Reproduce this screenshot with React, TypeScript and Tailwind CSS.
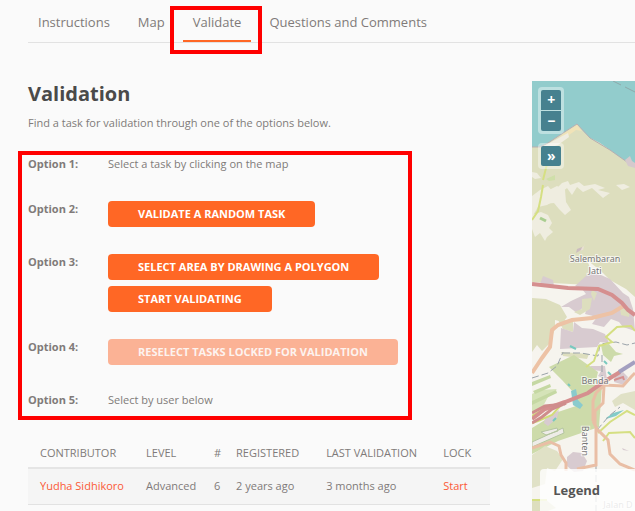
import type { ReactNode } from "react";

type Option = { label: string; content: ReactNode };

const tabs = ["Instructions", "Map", "Validate", "Questions and Comments"];

function ActionButton({ children, disabled = false }: { children: ReactNode; disabled?: boolean }) {
  return (
    <button
      type="button"
      disabled={disabled}
      className="h-[26px] rounded-[4px] bg-[#ff6725] px-[30px] text-[11px] leading-[26px] font-bold text-white uppercase disabled:bg-[#fbb295] disabled:text-[#fdf3ef]"
    >
      {children}
    </button>
  );
}

const options: Option[] = [
  { label: "Option 1:", content: <p>Select a task by clicking on the map</p> },
  {
    label: "Option 2:",
    content: (
      <div className="pt-[2px]">
        <ActionButton>Validate a random task</ActionButton>
      </div>
    ),
  },
  {
    label: "Option 3:",
    content: (
      <div className="flex flex-col items-start gap-[6px] pt-[2px]">
        <ActionButton>Select area by drawing a polygon</ActionButton>
        <ActionButton>Start validating</ActionButton>
      </div>
    ),
  },
  {
    label: "Option 4:",
    content: (
      <div className="pt-[2px]">
        <ActionButton disabled>Reselect tasks locked for validation</ActionButton>
      </div>
    ),
  },
  { label: "Option 5:", content: <p>Select by user below</p> },
];

const columns = [
  { name: "Contributor", width: "w-[106px]" },
  { name: "Level", width: "w-[68px]" },
  { name: "#", width: "w-[22px]" },
  { name: "Registered", width: "w-[90px]" },
  { name: "Last validation", width: "w-[117px]" },
  { name: "Lock", width: "w-[59px]" },
];

const contributors = [
  { name: "Yudha Sidhikoro", level: "Advanced", count: 6, registered: "2 years ago", last: "3 months ago" },
];

function NavBar() {
  return (
    <nav className="flex gap-2 border-b border-[#e2e2e2] text-[13px]">
      {tabs.map((tab) => {
        const active = tab === "Validate";
        return (
          <a
            key={tab}
            href="#"
            className={
              active
                ? "relative h-[42px] border-b-2 border-[#ff6725] px-[10px] leading-[44px]"
                : "h-[42px] px-[10px] leading-[44px]"
            }
          >
            {tab}
            {active && (
              <span className="pointer-events-none absolute top-[6px] -right-[11px] -bottom-[14px] -left-[13px] border-4 border-[#ff0000]" />
            )}
          </a>
        );
      })}
    </nav>
  );
}

function MapDrawing() {
  return (
    <svg
      viewBox="0 0 103 430"
      preserveAspectRatio="xMinYMin slice"
      className="block h-full w-full"
      aria-label="Map of the project area"
    >
      <rect width="103" height="430" fill="#f6f4ee" />
      {/* land and sea */}
      <path d="M0 66 8 66 16 62 31 52 45 43 51 50 58 57 68 62 78 69 86 75 95 81 103 84V216L94 208 78 199 69 190 55 179 61 194 58 204 0 201Z" fill="#dddebe" />
      <path d="M0 0H103V84L95 81 86 75 78 69 68 62 58 57 51 50 45 43 31 52 16 62 8 66 0 66Z" fill="#92cccc" />
      <path d="M0 66 8 66 16 62 31 52 45 43 58 57 78 69 95 81 103 84" fill="none" stroke="#b9aeb0" strokeWidth="1" />
      <path d="M31 53 45 44 50 50 44 49 37 54 32 59 27 57Z" fill="#f1e3b8" />
      <path d="M10 66 36 52 37 56 26 64 13 68Z" fill="#f0ede1" />
      <path d="M81 0 89 4M93 6 103 11" stroke="#8da9aa" strokeWidth="1" fill="none" />
      <path d="M93 79 98 75 100 80 103 82 103 87 96 85Z" fill="#d5c9cd" />
      {/* settlements */}
      <path d="M0 91 5 92 9 97 3 98 0 96ZM30 102 36 100 38 104 47 101 52 105 63 103 73 107 66 109 78 112 71 117 60 107 51 111 45 106 40 114 35 107 29 112 24 119 15 124 6 126 0 136V115L8 109 16 105 21 111Z" fill="#efede0" />
      <path d="M0 134 9 131 16 134 20 142 17 147 21 151 15 156 13 160 8 152 3 156 0 148Z" fill="#efede0" />
      <path d="M7 114 25 105 33 109 34 121 39 129 33 134 27 128 22 122 10 123Z" fill="#efede0" />
      <path d="M84 104 92 103 98 106 90 109Z" fill="#efede0" />
      <path d="M52 165 54 159 51 169 46 170Z" fill="#e9dfd5" />
      <path d="M45 168 50 166 49 169 44 172Z" fill="#cbbcbf" />
      <path d="M14 98 23 94 23 99 17 100Z" fill="#cfdfa9" />
      <path d="M14 67 16 79 11 99M11 104 9 116 6 130 0 139" fill="none" stroke="#d5df82" strokeWidth="2" />
      <path d="M8 137 14 140" stroke="#a9ce90" strokeWidth="3" fill="none" />
      <path d="M8 203 11 195 21 199 22 205 10 205ZM43 205 54 195 58 191 69 194 78 198 91 212 97 216 101 228 103 250 91 246 87 241 79 238 72 246 60 243 65 236 53 233 57 221 45 232 37 226 29 226 39 220 54 213 50 208Z" fill="#d8cbd0" />
      <path d="M0 217 14 218 28 224 35 236 31 241 23 239 23 248 17 263 10 270 5 264 0 271Z" fill="#dddebe" />
      <path d="M50 218 60 217 58 228 48 234 42 231 50 228ZM60 209 65 212 62 220 59 213ZM88 227 98 229 97 236 89 234ZM25 237 41 241 41 251 31 248Z" fill="#dddebe" />
      <path d="M29 247 41 251 42 241 50 247 61 248 73 253 77 262 68 261 65 266 28 268Z" fill="#d8cbd0" />
      <path d="M29 271 57 273 55 278 31 275Z" fill="#dddebe" />
      <path d="M58 285 73 285 75 299 66 295 69 290 60 289Z" fill="#d8cbd0" />
      <path d="M69 264 77 263 84 271 91 273 82 275 79 281 71 274Z" fill="#cddbaa" />
      <path d="M0 313 8 309 25 308 16 316 9 329 0 332Z" fill="#d5e3b8" />
      {/* airport */}
      <path d="M17 286 42 274 66 291 63 304 70 305 67 346 26 360 0 373V347L26 331 47 324 42 312 30 299Z" fill="#cddbaa" />
      <path d="M0 301 18 294 19 297 0 305ZM1 310 18 303 19 306 3 313ZM0 320 24 309 25 312 0 324Z" fill="#c5d8a3" />
      <path d="M0 361 31 347 32 352 0 366ZM9 351 25 347 26 350 14 354Z" fill="#eeece8" stroke="#b4c5a0" />
      <path d="M39 310 44 308 46 319 51 324 48 328 41 324Z" fill="#8acbcd" />
      <path d="M13 338 27 329 25 337 16 345 12 342Z" fill="#d8cbd0" />
      <path d="M0 335 14 327 31 322 20 334 6 340 0 342" fill="none" stroke="#d1dc78" strokeWidth="2" />
      <path d="M74 337 81 332 92 329 84 335 74 338Z" fill="#83cbc8" />
      {/* farmland south of the airport */}
      <path d="M0 374 13 365 25 370 31 378 23 390 15 387 13 403 0 407ZM80 320 89 313 103 310V329L91 322 83 326Z" fill="#e0e1c6" />
      <path d="M35 376 41 371 50 372 55 380 51 390 42 391 35 385Z" fill="#d8cbd0" />
      <path d="M90 367 97 370 91 369ZM83 296 91 291 96 296 92 304 82 301Z" fill="#d8cbd0" />
      <path d="M0 418 13 418 24 427 16 430H0Z" fill="#dddebe" />
      {/* streams and railway */}
      <path d="M0 297 16 292 25 285 31 271M31 272 49 272 66 275 68 263 84 261 95 264 103 262M70 274 70 298M65 349 77 335 88 326M64 384 64 430" fill="none" stroke="#9ba3aa" strokeWidth="1" strokeDasharray="7 3" />
      <path d="M38 265 44 268M76 291 79 294M72 280 75 283M36 303 38 305M21 340 24 337" fill="none" stroke="#78c9bf" strokeWidth="2" />
      {/* secondary roads */}
      <path d="M54 286 62 280 67 265 80 261 74 256 85 246 99 245 103 250M66 352 78 341 95 330 103 334M71 360 77 352 98 351 103 357M0 419 15 419" fill="none" stroke="#d5df82" strokeWidth="2" />
      <path d="M0 292 10 277 18 266 20 249 26 244 40 239 60 237 80 232 93 224" fill="none" stroke="#edc2a5" strokeWidth="4" />
      <path d="M61 340V320L64 312 72 304 91 305 99 296 103 292M61 340 65 348 76 359 78 373 88 383 103 389M0 367 18 361 27 365 29 374 34 382 34 390M45 388 64 384 64 345M72 305 71 322 63 330 63 344" fill="none" stroke="#e9bea5" strokeWidth="3" />
      {/* trunk roads and motorway */}
      <path d="M0 203 36 207 66 208 80 214 90 222 96 229 103 234M0 338 13 328 33 321 56 312 70 302 88 291" fill="none" stroke="#d58f8f" strokeWidth="4" />
      <path d="M0 332 13 325 33 323M0 342 10 336 20 328 34 322" fill="none" stroke="#cf8d8c" strokeWidth="3" />
      <path d="M87 291 103 281" fill="none" stroke="#a39fc0" strokeWidth="4" />
      <path d="M82 299 91 296 92 299" fill="none" stroke="#d58f8f" strokeWidth="2" />
      {/* place names */}
      <g
        fill="#777777"
        stroke="#ffffff"
        strokeOpacity="0.7"
        strokeWidth="2"
        paintOrder="stroke"
        fontFamily="'Noto Sans', 'Open Sans', sans-serif"
        fontSize="9"
        textAnchor="middle"
      >
        <text x="63" y="181">Salembaran</text>
        <text x="63" y="193">Jati</text>
        <text x="63" y="303">Benda</text>
        <text transform="translate(50 360) rotate(90)">Banten</text>
        <text x="86" y="427" fill="#999999">Jalan D</text>
      </g>
    </svg>
  );
}

function MapPanel() {
  const control = "block h-5 w-5 bg-[#46818f] text-center text-[14px] leading-5 font-bold text-white";
  return (
    <section className="relative h-[430px] overflow-hidden">
      <MapDrawing />
      <div className="absolute top-[6px] left-[6px] flex flex-col gap-[9px]">
        <div className="flex flex-col gap-px rounded-[4px] bg-white/40 p-[3px]">
          <button type="button" aria-label="Zoom in" className={control + " rounded-t-[2px]"}>+</button>
          <button type="button" aria-label="Zoom out" className={control + " rounded-b-[2px]"}>−</button>
        </div>
        <div className="rounded-[4px] bg-white/40 p-[3px]">
          <button type="button" aria-label="Expand" className={control + " rounded-[2px]"}>»</button>
        </div>
      </div>
      <div className="absolute right-0 bottom-0 left-2 h-[42px] rounded-tl-[4px] bg-white/80 px-[13px]">
        <h2 className="text-[13px] leading-[42px] font-bold text-[#555555]">Legend</h2>
      </div>
    </section>
  );
}

function ContributorTable() {
  return (
    <table className="mt-[28px] w-full table-fixed border-collapse text-left whitespace-nowrap">
      <thead>
        <tr className="h-[30px] border-b-2 border-[#e5e5e5]">
          {columns.map((column) => (
            <th key={column.name} scope="col" className={column.width + " pl-3 font-normal uppercase"}>
              {column.name}
            </th>
          ))}
        </tr>
      </thead>
      <tbody>
        {contributors.map((person) => (
          <tr key={person.name} className="h-[36px] border-b border-[#e2e2e2] bg-[#f5f5f5]">
            <td className="pl-3">
              <a href="#" className="text-[#fb5a35]">{person.name}</a>
            </td>
            <td className="pl-3">{person.level}</td>
            <td className="pl-3">{person.count}</td>
            <td className="pl-3">{person.registered}</td>
            <td className="pl-3">{person.last}</td>
            <td className="pl-3">
              <a href="#" className="text-[#fb5a35]">Start</a>
            </td>
          </tr>
        ))}
      </tbody>
    </table>
  );
}

export default function App() {
  return (
    <div className="min-h-screen overflow-hidden bg-[#fafafa] pl-7 font-['Open_Sans',sans-serif] text-[11px] leading-5 text-[#807a79]">
      <NavBar />
      <main className="grid grid-cols-[minmax(0,9fr)_minmax(0,2fr)] gap-[42px] pt-[38px]">
        <section>
          <h1 className="text-[20px] leading-[26px] font-bold text-[#4a4a4a]">Validation</h1>
          <p className="mt-[6px]">Find a task for validation through one of the options below.</p>
          <div className="relative mt-[21px]">
            <dl className="flex flex-col gap-[25px]">
              {options.map((option) => (
                <div key={option.label} className="flex">
                  <dt className="w-20 font-bold">{option.label}</dt>
                  <dd>{option.content}</dd>
                </div>
              ))}
            </dl>
            <span className="pointer-events-none absolute -top-[3px] -bottom-[10px] -left-[10px] w-[394px] border-4 border-[#ff0000]" />
          </div>
          <ContributorTable />
        </section>
        <MapPanel />
      </main>
    </div>
  );
}
